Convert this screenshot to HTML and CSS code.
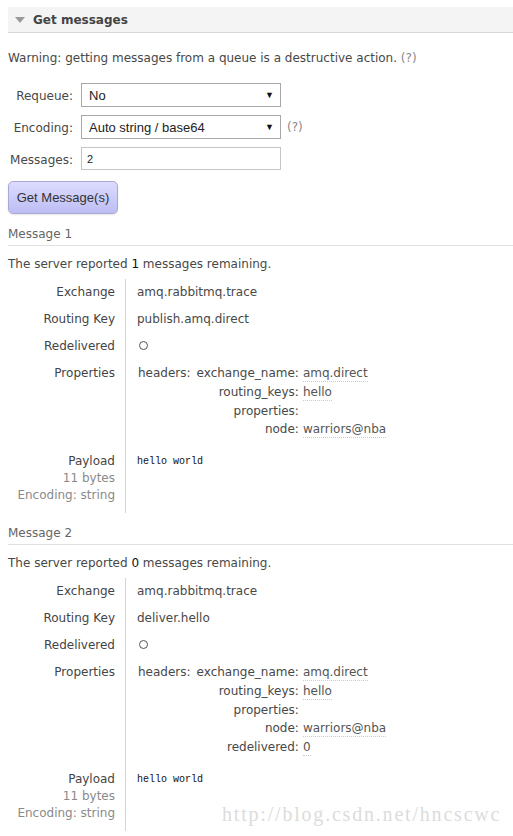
FILE: index.html
```html
<!DOCTYPE html>
<html>
<head>
	<title>Get messages</title>
	<meta name="viewport" content="width=device-width, initial-scale=1.0">
	<link rel="stylesheet" href="styles.css">
</head>
<body>

	<div class="section">
		<h2 class="section-head">
			<svg class="toggle" width="10" height="6" viewBox="0 0 10 6"><polygon points="0,0 10,0 5,6" fill="#9a9a9a"/></svg>
			Get messages
		</h2>

		<p class="warning">Warning: getting messages from a queue is a destructive action. <span class="help">(?)</span></p>

		<div class="form">
			<label>Requeue:</label>
			<div class="field">
				<div class="select"><span>No</span><span class="arrow">&#9660;</span></div>
			</div>
			<label>Encoding:</label>
			<div class="field">
				<div class="select"><span>Auto string / base64</span><span class="arrow">&#9660;</span></div>
				<span class="help">(?)</span>
			</div>
			<label>Messages:</label>
			<div class="field">
				<div class="input">2</div>
			</div>
		</div>

		<button class="get">Get Message(s)</button>

		<div class="message">
			<h3>Message 1</h3>
			<p class="remaining">The server reported <b>1</b> messages remaining.</p>
			<div class="props">
				<div class="key">Exchange</div>
				<div class="val">amq.rabbitmq.trace</div>
				<div class="key">Routing Key</div>
				<div class="val">publish.amq.direct</div>
				<div class="key">Redelivered</div>
				<div class="val"><span class="circle"></span></div>
				<div class="key">Properties</div>
				<div class="val">
					<div class="headers">
						<span class="hkey">headers:</span>
						<div class="kv">
							<span>exchange_name:</span><span class="dv">amq.direct</span>
							<span>routing_keys:</span><span class="dv">hello</span>
							<span>properties:</span><span></span>
							<span>node:</span><span class="dv">warriors@nba</span>
						</div>
					</div>
				</div>
				<div class="key payload-key">Payload<br><span class="sub">11 bytes</span><br><span class="sub">Encoding: string</span></div>
				<div class="val payload"><pre>hello world</pre></div>
			</div>
		</div>

		<div class="message">
			<h3>Message 2</h3>
			<p class="remaining">The server reported <b>0</b> messages remaining.</p>
			<div class="props">
				<div class="key">Exchange</div>
				<div class="val">amq.rabbitmq.trace</div>
				<div class="key">Routing Key</div>
				<div class="val">deliver.hello</div>
				<div class="key">Redelivered</div>
				<div class="val"><span class="circle"></span></div>
				<div class="key">Properties</div>
				<div class="val">
					<div class="headers">
						<span class="hkey">headers:</span>
						<div class="kv">
							<span>exchange_name:</span><span class="dv">amq.direct</span>
							<span>routing_keys:</span><span class="dv">hello</span>
							<span>properties:</span><span></span>
							<span>node:</span><span class="dv">warriors@nba</span>
							<span>redelivered:</span><span class="dv">0</span>
						</div>
					</div>
				</div>
				<div class="key payload-key">Payload<br><span class="sub">11 bytes</span><br><span class="sub">Encoding: string</span></div>
				<div class="val payload"><pre>hello world</pre></div>
			</div>
		</div>
	</div>

	<div class="watermark">http://blog.csdn.net/hncscwc</div>

</body>
</html>
```

FILE: styles.css
```css
*{
	box-sizing: border-box;
}
html,body{
	width: 100%;
	height: 100%;
}
body{
	margin: 0px;
	padding: 7px 0px 0px 8px;
	font-family: "DejaVu Sans", Verdana, sans-serif;
	font-size: 12px;
	color: #484848;
	background: white;
	position: relative;
	overflow: hidden;
}

.section-head{
	margin: 0px;
	height: 26px;
	display: flex;
	align-items: center;
	gap: 8px;
	padding-left: 7px;
	background: #f4f4f4;
	border-bottom: 1px solid #d8d8d8;
	font-size: 12px;
	font-weight: bold;
	color: #444;
}

.warning{
	margin: 18px 0px 0px 0px;
	line-height: 15px;
}

.help{
	color: #888;
}

.form{
	display: grid;
	grid-template-columns: 65px auto;
	column-gap: 8px;
	row-gap: 8px;
	align-items: center;
	margin-top: 17px;
}

.form label{
	text-align: right;
	padding-top: 2px;
}

.field{
	display: flex;
	align-items: center;
	gap: 6px;
}

.select{
	width: 200px;
	height: 24px;
	border: 1px solid #a8a8a8;
	display: flex;
	justify-content: space-between;
	align-items: center;
	padding: 0px 6px 0px 7px;
	font-family: "Liberation Sans", Arial, sans-serif;
	font-size: 13px;
	color: #222;
	background: white;
}

.select .arrow{
	font-size: 9px;
	color: #111;
}

.input{
	width: 200px;
	height: 23px;
	border: 1px solid #c4c4c4;
	display: flex;
	align-items: center;
	padding-left: 5px;
	font-family: "Liberation Sans", Arial, sans-serif;
	font-size: 11px;
	color: #222;
}

.get{
	margin-top: 11px;
	height: 33px;
	width: 110px;
	border: 1px solid #a9a9d6;
	border-radius: 5px;
	background: linear-gradient(#dcdcff, #bdbdf4);
	font-family: "Liberation Sans", Arial, sans-serif;
	font-size: 13px;
	color: #333;
	padding: 0px;
	box-shadow: 0px 1px 2px rgba(0,0,0,0.1);
}

.message h3{
	margin: 13px 0px 0px 0px;
	padding-bottom: 3px;
	font-size: 12px;
	font-weight: normal;
	color: #666;
	line-height: 15px;
	border-bottom: 1px solid #e0e0e0;
}

.remaining{
	margin: 11px 0px 0px 0px;
	line-height: 15px;
}

.remaining b{
	font-weight: normal;
	color: #111;
}

.props{
	display: grid;
	grid-template-columns: 117px 1fr;
	margin-top: 7px;
}

.key{
	text-align: right;
	padding: 6px 10px 6px 0px;
	line-height: 15px;
	color: #444;
}

.val{
	border-left: 1px solid #d4d4d4;
	padding: 6px 0px 6px 11px;
	line-height: 15px;
}

.circle{
	display: inline-block;
	width: 9px;
	height: 9px;
	border: 1px solid #555;
	border-radius: 50%;
	margin-left: 2px;
}

.headers{
	display: flex;
	gap: 6px;
	align-items: flex-start;
}

.hkey{
	padding-left: 1px;
}

.kv{
	display: grid;
	grid-template-columns: auto auto;
	column-gap: 4px;
	row-gap: 3px;
	justify-items: end;
}

.kv span:nth-child(2n){
	justify-self: start;
}

.dv{
	border-bottom: 1px dotted #ccc;
	color: #555;
}

.payload-key{
	padding-top: 9px;
	padding-bottom: 9px;
	line-height: 17px;
}

.sub{
	color: #8a8a8a;
}

.payload{
	padding-top: 9px;
}

.payload pre{
	margin: 0px;
	font-family: "Liberation Mono", "Courier New", monospace;
	font-size: 10px;
	line-height: 17px;
	color: #111;
}

.watermark{
	position: absolute;
	left: 222px;
	top: 803px;
	font-family: "Liberation Serif", serif;
	font-size: 20px;
	color: #dcdcdc;
	letter-spacing: 1.8px;
}
```
